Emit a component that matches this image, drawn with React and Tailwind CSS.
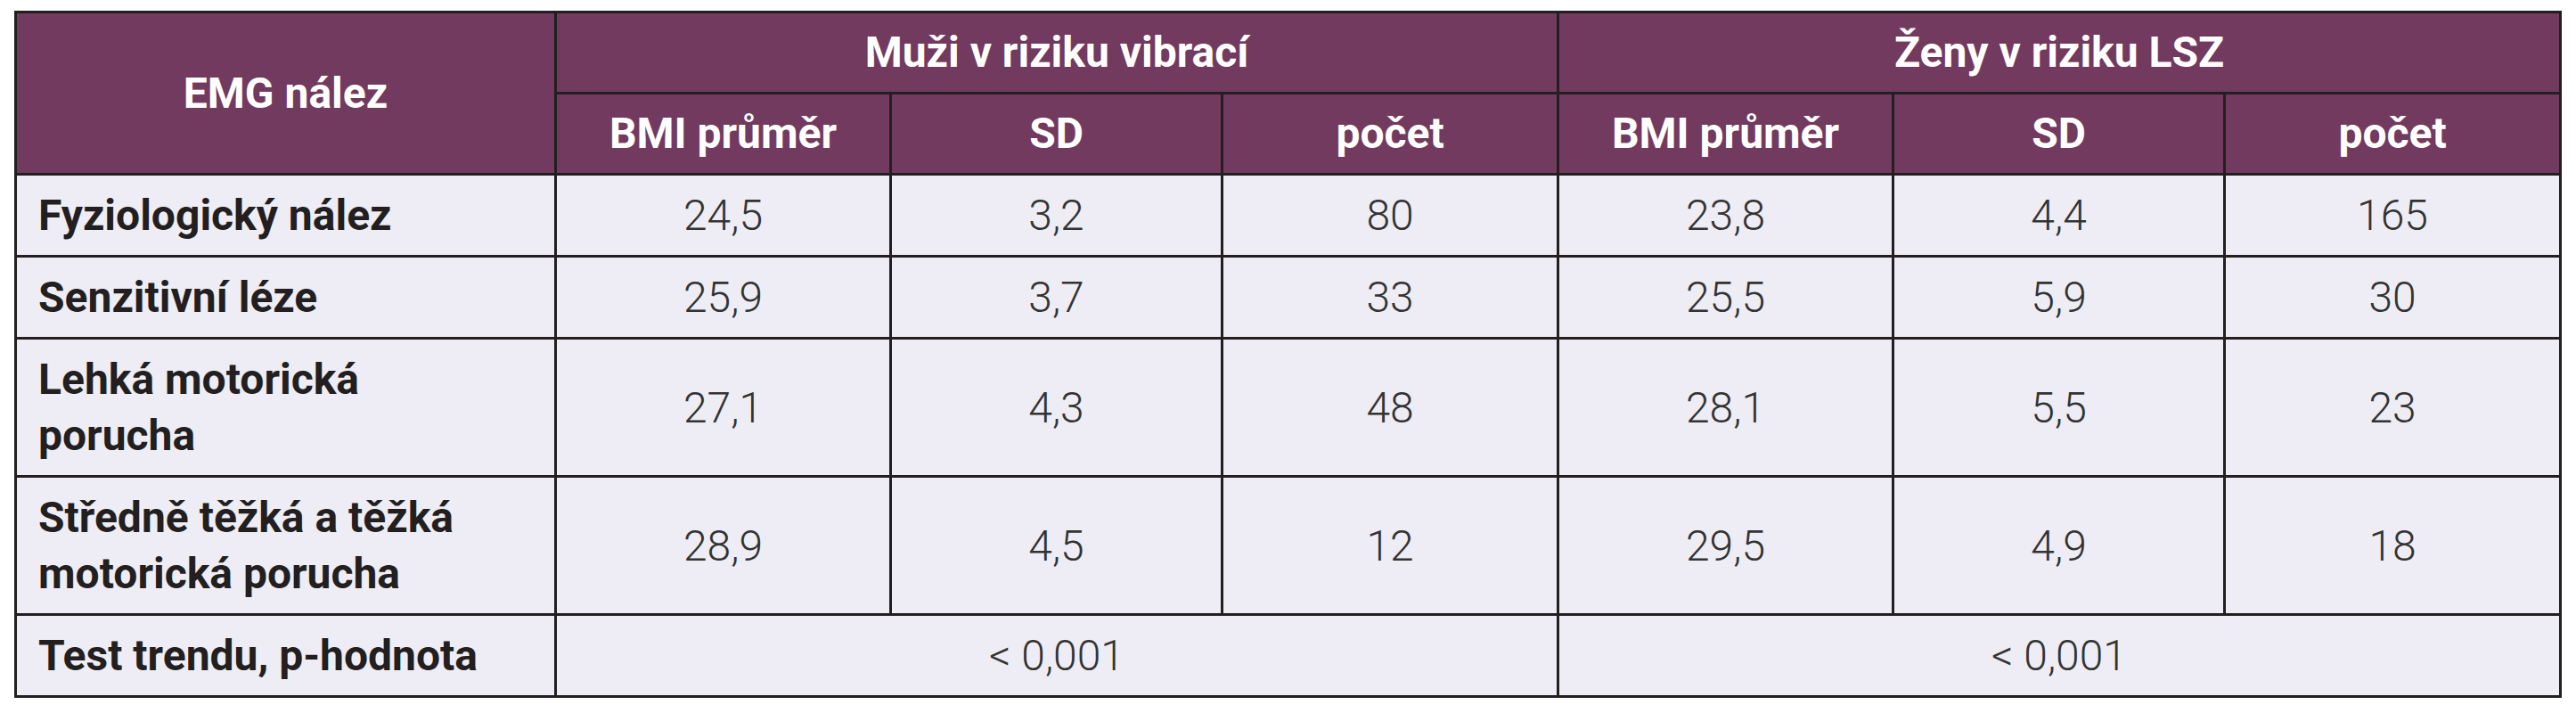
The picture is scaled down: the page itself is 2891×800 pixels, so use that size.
// App.jsx
const rows = [
  { label: "Fyziologický nález", m: ["24,5", "3,2", "80"], z: ["23,8", "4,4", "165"] },
  { label: "Senzitivní léze", m: ["25,9", "3,7", "33"], z: ["25,5", "5,9", "30"] },
  { label: ["Lehká motorická", "porucha"], m: ["27,1", "4,3", "48"], z: ["28,1", "5,5", "23"] },
  { label: ["Středně těžká a těžká", "motorická porucha"], m: ["28,9", "4,5", "12"], z: ["29,5", "4,9", "18"] },
];

const th = "border-[3px] border-[#231f20] bg-[#723a5f] text-white font-bold text-center h-[91px] leading-[60px]";
const tdLabel = "border-[3px] border-[#231f20] font-bold text-[#231f20] text-left pl-6 pr-4 py-[13px] leading-[63px]";
const tdNum = "border-[3px] border-[#231f20] font-light text-[#333333] text-center py-[13px] leading-[63px]";

function App() {
  return (
    <div className="bg-white min-h-screen pt-[12px] pl-[16px]" style={{ fontFamily: "Roboto, 'Noto Sans', sans-serif" }}>
      <table className="border-collapse table-fixed w-[2858px] text-[48px] bg-[#eeedf5]">
        <colgroup>
          <col className="w-[606px]" />
          <col className="w-[376px]" />
          <col className="w-[372px]" />
          <col className="w-[377px]" />
          <col className="w-[376px]" />
          <col className="w-[372px]" />
          <col className="w-[377px]" />
        </colgroup>
        <thead>
          <tr>
            <th rowSpan={2} className={th}>EMG nález</th>
            <th colSpan={3} className={th}>Muži v riziku vibrací</th>
            <th colSpan={3} className={th}>Ženy v riziku LSZ</th>
          </tr>
          <tr>
            <th className={th}>BMI průměr</th>
            <th className={th}>SD</th>
            <th className={th}>počet</th>
            <th className={th}>BMI průměr</th>
            <th className={th}>SD</th>
            <th className={th}>počet</th>
          </tr>
        </thead>
        <tbody>
          {rows.map((r, i) => (
            <tr key={i}>
              <td className={tdLabel}>
                {Array.isArray(r.label) ? r.label.map((l) => <div key={l}>{l}</div>) : r.label}
              </td>
              {[...r.m, ...r.z].map((v, j) => (
                <td key={j} className={tdNum}>{v}</td>
              ))}
            </tr>
          ))}
          <tr>
            <td className={tdLabel}>Test trendu, p-hodnota</td>
            <td colSpan={3} className={tdNum}>&lt; 0,001</td>
            <td colSpan={3} className={tdNum}>&lt; 0,001</td>
          </tr>
        </tbody>
      </table>
    </div>
  );
}

export default App;
